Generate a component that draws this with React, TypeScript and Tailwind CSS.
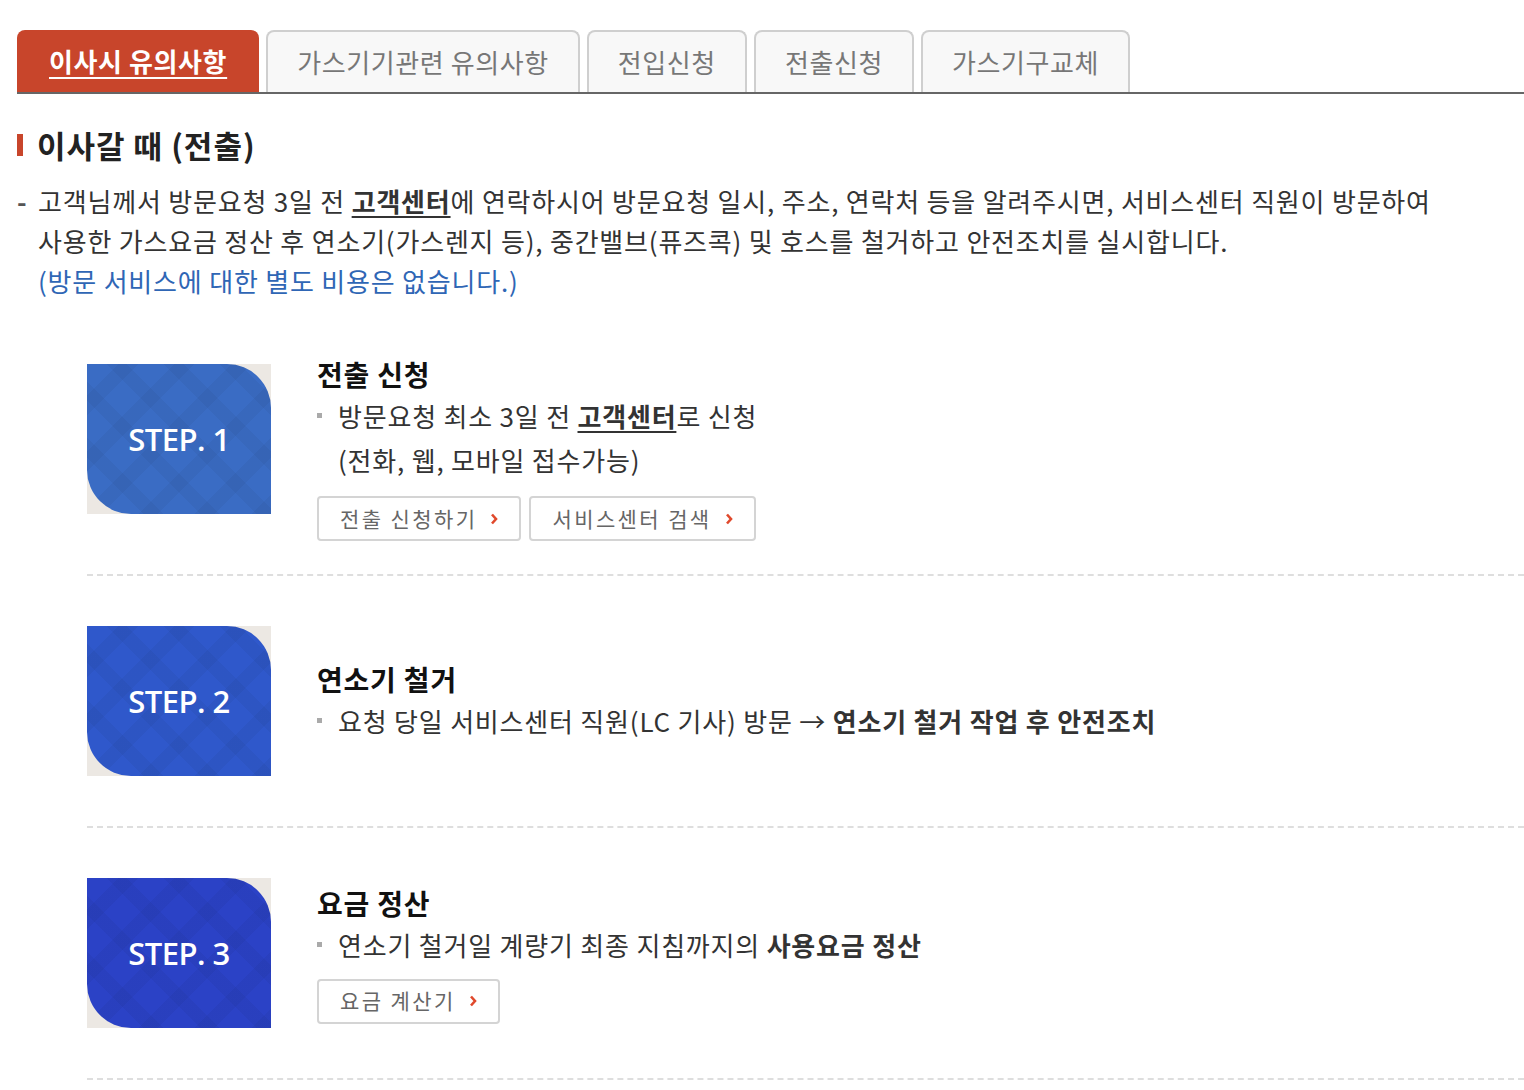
import React from "react";

const KR = "font-['Noto_Sans_CJK_KR','Noto_Sans',sans-serif]";

const tabs = ["이사시 유의사항", "가스기기관련 유의사항", "전입신청", "전출신청", "가스기구교체"];

function Chevron() {
  return (
    <svg width="8" height="12" viewBox="0 0 8 12" className="ml-[13px] inline-block">
      <path d="M2 1.5 L6 6 L2 10.5" stroke="#e0492c" strokeWidth="2.6" fill="none" />
    </svg>
  );
}

function LinkButton({ label }: { label: string }) {
  return (
    <span className="inline-flex h-[45px] items-center rounded-[4px] border-2 border-[#d4d4d4] bg-white px-[21px] text-[21px] tracking-[2.4px] text-[#666]">
      {label}
      <Chevron />
    </span>
  );
}

function StepImage({ n, color, className }: { n: number; color: string; className?: string }) {
  return (
    <div className={`h-[150px] w-[184px] shrink-0 bg-[#ece8e3] ${className ?? ""}`}>
      <div
        className={`relative flex h-full w-full items-center justify-center overflow-hidden rounded-tr-[44px] rounded-bl-[44px] ${color}`}
      >
        <div className="absolute inset-0 bg-[repeating-linear-gradient(45deg,rgba(0,0,0,0.04)_0px,rgba(0,0,0,0.04)_14px,transparent_14px,transparent_40px)]" />
        <div className="absolute inset-0 bg-[repeating-linear-gradient(-45deg,rgba(0,0,0,0.04)_0px,rgba(0,0,0,0.04)_14px,transparent_14px,transparent_40px)]" />
        <span className="relative font-['Open_Sans',sans-serif] text-[31px] font-semibold tracking-[-0.5px] text-white">
          STEP. {n}
        </span>
      </div>
    </div>
  );
}

function Bullet({ children }: { children: React.ReactNode }) {
  return (
    <div className="flex text-[26px] leading-[44px] tracking-[0.8px] text-[#333]">
      <span className="mr-[16px] mt-[19px] h-[5px] w-[5px] shrink-0 bg-[#aaa]" />
      <div>{children}</div>
    </div>
  );
}

function StepRow({
  n,
  color,
  title,
  imgClass,
  children,
}: {
  n: number;
  color: string;
  title: string;
  imgClass?: string;
  children: React.ReactNode;
}) {
  return (
    <div className="flex items-center border-b-2 border-dashed border-[#dedede] py-[33px]">
      <StepImage n={n} color={color} className={`my-[17px] ${imgClass ?? ""}`} />
      <div className="ml-[46px]">
        <h3 className="text-[28px] font-bold leading-[40px] tracking-[0.8px] text-[#111]">{title}</h3>
        {children}
      </div>
    </div>
  );
}

export default function App() {
  return (
    <div className={`${KR} min-h-screen bg-white pl-[17px] pt-[30px] text-[#333]`}>
      {/* Tabs */}
      <div className="flex gap-[7px] border-b-2 border-[#666]">
        {tabs.map((t, i) =>
          i === 0 ? (
            <div
              key={t}
              className="flex h-[62px] items-center rounded-t-[8px] bg-[#c8452b] px-[32px] pb-[2px] text-[26px] font-bold tracking-[0.6px] text-white underline underline-offset-[5px]"
            >
              {t}
            </div>
          ) : (
            <div
              key={t}
              className="flex h-[62px] items-center rounded-t-[8px] border-2 border-b-0 border-[#cfcfcf] bg-[#f8f8f8] px-[29px] pb-[2px] text-[26px] tracking-[0.6px] text-[#777]"
            >
              {t}
            </div>
          )
        )}
      </div>

      {/* Section title */}
      <h2 className="mt-[31px] flex items-center text-[31px] font-bold leading-[40px] tracking-[1px] text-[#222]">
        <span className="mr-[14px] h-[22px] w-[6px] bg-[#c8452b]" />
        이사갈 때 (전출)
      </h2>

      <div className="mt-[16px] flex text-[26px] leading-[40px] tracking-[0.8px] text-[#333]">
        <span className="w-[21px] shrink-0 font-bold text-[#555]">-</span>
        <div>
          <p>
            고객님께서 방문요청 3일 전 <b className="underline underline-offset-[4px]">고객센터</b>에 연락하시어 방문요청
            일시, 주소, 연락처 등을 알려주시면, 서비스센터 직원이 방문하여
            <br />
            사용한 가스요금 정산 후 연소기(가스렌지 등), 중간밸브(퓨즈콕) 및 호스를 철거하고 안전조치를 실시합니다.
          </p>
          <p className="text-[#2f66b5]">(방문 서비스에 대한 별도 비용은 없습니다.)</p>
        </div>
      </div>

      {/* Steps */}
      <div className="ml-[70px] mt-[20px]">
        <StepRow n={1} color="bg-[#3a6cc4]" title="전출 신청" imgClass="self-start mt-[10px]">
          <Bullet>
            방문요청 최소 3일 전 <b className="underline underline-offset-[4px]">고객센터</b>로 신청
            <br />
            (전화, 웹, 모바일 접수가능)
          </Bullet>
          <div className="mt-[14px] flex gap-[8px]">
            <LinkButton label="전출 신청하기" />
            <LinkButton label="서비스센터 검색" />
          </div>
        </StepRow>

        <StepRow n={2} color="bg-[#2f58cb]" title="연소기 철거">
          <Bullet>
            요청 당일 서비스센터 직원(LC 기사) 방문 → <b>연소기 철거 작업 후 안전조치</b>
          </Bullet>
        </StepRow>

        <StepRow n={3} color="bg-[#2b42c6]" title="요금 정산">
          <Bullet>
            연소기 철거일 계량기 최종 지침까지의 <b>사용요금 정산</b>
          </Bullet>
          <div className="mt-[12px] flex gap-[8px]">
            <LinkButton label="요금 계산기" />
          </div>
        </StepRow>
      </div>
    </div>
  );
}
